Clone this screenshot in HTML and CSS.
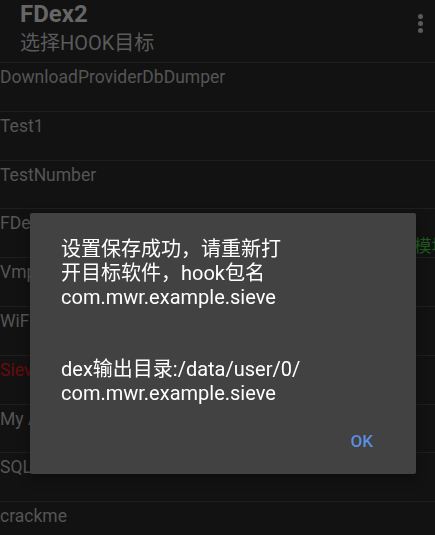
FILE: index.html
```html
<!DOCTYPE html>
<html>
<head>
    <meta charset="utf-8">
    <title>FDex2</title>
    <link rel="stylesheet" href="styles.css">
</head>
<body>
    <div class="app">
        <div class="toolbar">
            <div class="titles">
                <div class="title">FDex2</div>
                <div class="subtitle">选择HOOK目标</div>
            </div>
            <div class="menu">
                <span class="dot"></span>
                <span class="dot"></span>
                <span class="dot"></span>
            </div>
        </div>

        <div class="app-list">
            <div class="app-row"><div class="app-name">DownloadProviderDbDumper</div></div>
            <div class="app-row"><div class="app-name">Test1</div></div>
            <div class="app-row"><div class="app-name">TestNumber</div></div>
            <div class="app-row">
                <div class="app-name">FDex2</div>
                <div class="app-meta"><span class="module">模块</span></div>
            </div>
            <div class="app-row"><div class="app-name">VmpTest</div></div>
            <div class="app-row"><div class="app-name">WiFi密码</div></div>
            <div class="app-row"><div class="app-name selected">Sieve</div></div>
            <div class="app-row"><div class="app-name">My Application</div></div>
            <div class="app-row"><div class="app-name">SQLiteDemo</div></div>
            <div class="app-row"><div class="app-name">crackme</div></div>
        </div>
    </div>

    <div class="overlay">
        <div class="dialog">
            <div class="dialog-message">
                设置保存成功，请重新打<br>
                开目标软件，hook包名<br>
                com.mwr.example.sieve<br>
                <br>
                <br>
                dex输出目录:/data/user/0/<br>
                com.mwr.example.sieve
            </div>
            <div class="dialog-actions">
                <button class="dialog-button">OK</button>
            </div>
        </div>
    </div>
</body>
</html>
```

FILE: styles.css
```css
* {
    margin: 0;
    padding: 0;
    box-sizing: border-box;
    font-family: Roboto, "Noto Sans CJK SC", sans-serif;
}

body {
    background: #121212;
    width: 435px;
    height: 535px;
    overflow: hidden;
}

.app {
    width: 100%;
    overflow: hidden;
}

.toolbar {
    display: flex;
    justify-content: space-between;
    height: 63px;
    padding: 1px 0 0 20px;
    border-bottom: 1px solid #1e1e1e;
}

.title {
    font-size: 24px;
    font-weight: bold;
    line-height: 26px;
    color: #666666;
}

.subtitle {
    margin-top: 4px;
    font-size: 20px;
    line-height: 24px;
    color: #5a5a5a;
}

.menu {
    display: flex;
    flex-direction: column;
    gap: 2.3px;
    padding: 12.5px 12px 0 0;
}

.dot {
    width: 5px;
    height: 5px;
    border-radius: 50%;
    background: #5a5a5a;
}

.app-row {
    height: 48.8px;
    padding-top: 4px;
    border-bottom: 1px solid #1e1e1e;
}

.app-name {
    font-size: 17.5px;
    line-height: 21px;
    color: #555555;
    white-space: nowrap;
}

.app-name.selected {
    color: #6a0b0b;
}

.app-meta {
    display: flex;
    justify-content: flex-end;
    margin: 2px -14px 0 0;
    font-size: 17.5px;
    line-height: 21px;
}

.module {
    color: #1d5a1d;
}

.overlay {
    position: fixed;
    top: 0;
    left: 0;
    right: 0;
    bottom: 0;
    padding: 213px 0 0 30px;
}

.dialog {
    width: 386px;
    height: 261px;
    background: #424242;
    border-radius: 2px;
    box-shadow: 0 4px 12px rgba(0, 0, 0, 0.35);
    padding: 24px 0 0 31px;
}

.dialog-message {
    font-size: 20px;
    line-height: 24px;
    color: #ffffff;
}

.dialog-actions {
    display: flex;
    justify-content: flex-end;
    margin-top: 26px;
    padding-right: 43px;
}

.dialog-button {
    background: none;
    border: none;
    font-size: 17px;
    font-weight: 500;
    line-height: 20px;
    color: #5b8fe6;
    cursor: pointer;
}
```
